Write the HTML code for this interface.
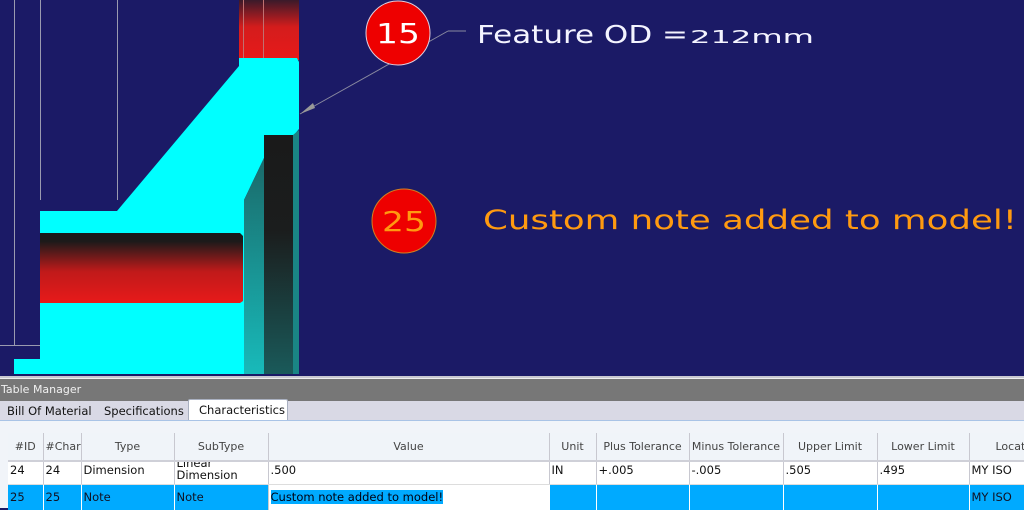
<!DOCTYPE html>
<html><head><meta charset="utf-8">
<style>
*{margin:0;padding:0;box-sizing:border-box}
body{width:1024px;height:508px;overflow:hidden;background:#1b1a66;font-family:"DejaVu Sans","Liberation Sans",sans-serif;position:relative}
svg{position:absolute;left:0;top:0}
#panel{position:absolute;left:0;top:376px;width:1024px;height:132px;background:#f1f4f9;border-top:2px solid #c8c8d0}
#title{height:23px;background:#777;color:#f0f0f0;font-size:11px;line-height:22px;padding-left:1px;border-top:1px solid #eee}
#tabs{height:20px;background:#d9d9e5;border-bottom:1px solid #a9c3e6;position:relative;font-size:11.5px;color:#111}
#tabs span{position:absolute;top:3px}
#tabs .act{top:-2px;left:188px;width:100px;height:21px;background:#fff;border:1px solid #a9b0c0;border-bottom:none;border-radius:2px 2px 0 0;padding:3px 0 0 10px}
table{position:absolute;left:8px;top:55px;width:1021px;border-collapse:collapse;font-size:11px;table-layout:fixed}
td,th{border-right:1px solid #c8c8d0;white-space:nowrap;overflow:hidden;padding:0 2px}
th{font-weight:normal;color:#444;height:28px;background:#f0f4f9;text-align:center;border-bottom:2px solid #cfd0d8}
tr.r1 td{background:#fff;height:23px;vertical-align:top;padding-top:1px;color:#111;border-bottom:1px solid #ddd;font-size:11.5px}
tr.r2 td{background:#00aaff;height:26px;color:#112;border-right:1px solid #fff;font-size:11.5px}
</style></head><body>
<svg width="1024" height="376" viewBox="0 0 1024 376">
<defs>
<linearGradient id="rt" x1="0" y1="0" x2="0" y2="1"><stop offset="0" stop-color="#3a1a2a"/><stop offset="0.45" stop-color="#d41c1c"/><stop offset="1" stop-color="#e81a1a"/></linearGradient>
<linearGradient id="rb" x1="0" y1="0" x2="0" y2="1"><stop offset="0" stop-color="#1a1a1a"/><stop offset="0.12" stop-color="#1c1a1a"/><stop offset="0.55" stop-color="#c01a1a"/><stop offset="1" stop-color="#e81a1a"/></linearGradient>
<linearGradient id="tf" x1="0" y1="0" x2="0" y2="1"><stop offset="0" stop-color="#1a6a6a"/><stop offset="1" stop-color="#18baba"/></linearGradient>
<linearGradient id="bk" x1="0" y1="0" x2="0" y2="1"><stop offset="0" stop-color="#1a1a1a"/><stop offset="0.4" stop-color="#1b1d1d"/><stop offset="1" stop-color="#1a5a5a"/></linearGradient>
</defs>
<g stroke="#9a9ab0" stroke-width="1" fill="none">
<line x1="14.5" y1="0" x2="14.5" y2="345"/><line x1="40.5" y1="0" x2="40.5" y2="200"/><line x1="117.5" y1="0" x2="117.5" y2="200"/><line x1="0" y1="345.5" x2="40" y2="345.5"/>
</g>
<rect x="239" y="0" width="60" height="60" fill="url(#rt)"/>
<line x1="243.5" y1="0" x2="243.5" y2="58" stroke="#c07070"/><line x1="263.5" y1="0" x2="263.5" y2="58" stroke="#c07070"/>
<polygon fill="#00ffff" points="239,58 297,58 299,62 299,129 294,135 264,135 264,158 244,200 244,374 14,374 14,359 40,359 40,211 117,211 239,66"/>
<polygon fill="url(#rb)" points="40,233 240,233 243,236 243,301 240,303 40,303"/>
<polygon fill="url(#tf)" points="244,200 264,158 267,158 267,374 244,374"/>
<rect x="264" y="135" width="30" height="239" fill="url(#bk)"/>
<polygon fill="#1a8585" points="293,135 299,130 299,374 293,374"/>
<line x1="300" y1="114" x2="448" y2="31" stroke="#8a8aa0" stroke-width="1"/><line x1="448" y1="31" x2="466" y2="31" stroke="#8a8aa0"/>
<polygon fill="#999" points="300,114 313,103 315,108"/>
<circle cx="398" cy="33" r="32" fill="#ee0000" stroke="#e0d0e0" stroke-width="1"/>
<text x="398" y="43" fill="#fff" font-size="28" text-anchor="middle" font-family="DejaVu Sans,sans-serif" textLength="44" lengthAdjust="spacingAndGlyphs">15</text>
<text x="477" y="43" fill="#f4f4ff" font-size="25" font-family="DejaVu Sans,sans-serif" textLength="211" lengthAdjust="spacingAndGlyphs">Feature OD =</text>
<text x="690" y="43" fill="#f4f4ff" font-size="18" font-family="DejaVu Sans,sans-serif" textLength="124" lengthAdjust="spacingAndGlyphs">212mm</text>
<circle cx="404" cy="221" r="32" fill="#ee0000" stroke="#d08020" stroke-width="1"/>
<text x="404" y="231" fill="#ff9a10" font-size="28" text-anchor="middle" font-family="DejaVu Sans,sans-serif" textLength="44" lengthAdjust="spacingAndGlyphs">25</text>
<text x="483" y="229" fill="#ff9a10" font-size="27" font-family="DejaVu Sans,sans-serif" textLength="534" lengthAdjust="spacingAndGlyphs">Custom note added to model!</text>
</svg>
<div id="panel">
<div id="title">Table Manager</div>
<div id="tabs"><span style="left:7px">Bill Of Material</span><span style="left:104px">Specifications</span><span class="act">Characteristics</span></div>
<table>
<colgroup><col style="width:35px"><col style="width:38px"><col style="width:93px"><col style="width:94px"><col style="width:281px"><col style="width:47px"><col style="width:93px"><col style="width:94px"><col style="width:94px"><col style="width:92px"><col style="width:60px"></colgroup>
<tr><th>#ID</th><th>#Char</th><th>Type</th><th>SubType</th><th>Value</th><th>Unit</th><th>Plus Tolerance</th><th>Minus Tolerance</th><th>Upper Limit</th><th>Lower Limit</th><th style="text-align:left;padding-left:26px">Locat</th></tr>
<tr class="r1"><td>24</td><td>24</td><td>Dimension</td><td style="line-height:12px;padding-top:0"><div style="margin-top:-5px">Linear</div><div>Dimension</div></td><td>.500</td><td>IN</td><td>+.005</td><td>-.005</td><td>.505</td><td>.495</td><td>MY ISO</td></tr>
<tr class="r2"><td>25</td><td>25</td><td>Note</td><td style="border-right:1px solid #ccc">Note</td><td style="background:#fff"><span style="background:#00aaff;color:#001">Custom note added to model!</span></td><td></td><td></td><td></td><td></td><td></td><td>MY ISO</td></tr>
</table>
</div>
</body></html>
